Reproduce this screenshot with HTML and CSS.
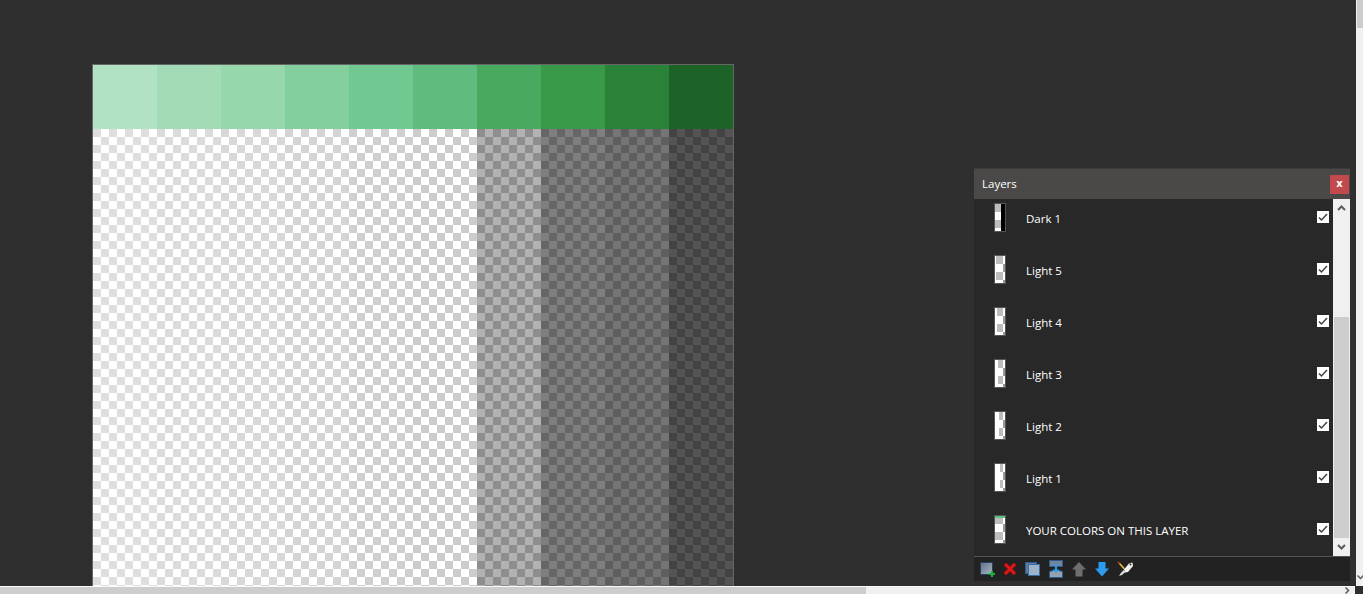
FILE: index.html
```html
<!DOCTYPE html>
<html lang="en">
<head>
    <meta charset="UTF-8">
    <meta name="viewport" content="width=device-width, initial-scale=1.0">
    <title>Layers</title>
    <link rel="stylesheet" href="styles.css">
</head>
<body>
    <div class="app">
        <main class="workspace">
            <div class="canvas">
                <div class="swatches">
                    <div class="swatch s1"></div>
                    <div class="swatch s2"></div>
                    <div class="swatch s3"></div>
                    <div class="swatch s4"></div>
                    <div class="swatch s5"></div>
                    <div class="swatch s6"></div>
                    <div class="swatch s7"></div>
                    <div class="swatch s8"></div>
                    <div class="swatch s9"></div>
                    <div class="swatch s10"></div>
                </div>
                <div class="shades">
                    <div class="shade s1"></div>
                    <div class="shade s2"></div>
                    <div class="shade s3"></div>
                    <div class="shade s4"></div>
                    <div class="shade s5"></div>
                    <div class="shade s6"></div>
                    <div class="shade s7"></div>
                    <div class="shade s8"></div>
                    <div class="shade s9"></div>
                    <div class="shade s10"></div>
                </div>
            </div>

            <!-- floating window -->
            <section class="panel">
                <header class="panel-head">
                    <span class="panel-title">Layers</span>
                    <button class="close">x</button>
                </header>
                <div class="panel-body">
                    <div class="layers">
                        <div class="layer">
                            <svg class="thumb" viewBox="0 0 10 27"><rect width="10" height="27" fill="#fff"/><path d="M0 0h6v8H0zM0 16h6v8H0z" fill="#bdbdbd"/><rect x="6" width="4" height="27" fill="#000"/></svg>
                            <span class="layer-name">Dark 1</span>
                            <svg class="check" viewBox="0 0 12 12"><rect width="12" height="12" fill="#fff"/><path d="M2 6.500l2.500 2.500L10 3" fill="none" stroke="#444" stroke-width="1.500"/></svg>
                        </div>
                        <div class="layer">
                            <svg class="thumb" viewBox="0 0 10 27"><rect width="10" height="27" fill="#fff"/><path d="M1 0h7v8H1zM1 16h7v8H1z" fill="#bdbdbd"/><path d="M8 8h2v8H8zM8 24h2v3H8z" fill="#999"/></svg>
                            <span class="layer-name">Light 5</span>
                            <svg class="check" viewBox="0 0 12 12"><rect width="12" height="12" fill="#fff"/><path d="M2 6.500l2.500 2.500L10 3" fill="none" stroke="#444" stroke-width="1.500"/></svg>
                        </div>
                        <div class="layer">
                            <svg class="thumb" viewBox="0 0 10 27"><rect width="10" height="27" fill="#fff"/><path d="M2 0h6v8H2zM2 16h6v8H2z" fill="#bdbdbd"/><path d="M8 8h2v8H8zM8 24h2v3H8z" fill="#999"/></svg>
                            <span class="layer-name">Light 4</span>
                            <svg class="check" viewBox="0 0 12 12"><rect width="12" height="12" fill="#fff"/><path d="M2 6.500l2.500 2.500L10 3" fill="none" stroke="#444" stroke-width="1.500"/></svg>
                        </div>
                        <div class="layer">
                            <svg class="thumb" viewBox="0 0 10 27"><rect width="10" height="27" fill="#fff"/><path d="M3 0h5v8H3zM3 16h5v8H3z" fill="#bdbdbd"/><path d="M8 8h2v8H8zM8 24h2v3H8z" fill="#999"/></svg>
                            <span class="layer-name">Light 3</span>
                            <svg class="check" viewBox="0 0 12 12"><rect width="12" height="12" fill="#fff"/><path d="M2 6.500l2.500 2.500L10 3" fill="none" stroke="#444" stroke-width="1.500"/></svg>
                        </div>
                        <div class="layer">
                            <svg class="thumb" viewBox="0 0 10 27"><rect width="10" height="27" fill="#fff"/><path d="M4 0h4v8H4zM4 16h4v8H4z" fill="#bdbdbd"/><path d="M8 8h2v8H8zM8 24h2v3H8z" fill="#999"/></svg>
                            <span class="layer-name">Light 2</span>
                            <svg class="check" viewBox="0 0 12 12"><rect width="12" height="12" fill="#fff"/><path d="M2 6.500l2.500 2.500L10 3" fill="none" stroke="#444" stroke-width="1.500"/></svg>
                        </div>
                        <div class="layer">
                            <svg class="thumb" viewBox="0 0 10 27"><rect width="10" height="27" fill="#fff"/><path d="M5 0h3v8H5zM5 16h3v8H5z" fill="#bdbdbd"/><path d="M8 8h2v8H8zM8 24h2v3H8z" fill="#999"/></svg>
                            <span class="layer-name">Light 1</span>
                            <svg class="check" viewBox="0 0 12 12"><rect width="12" height="12" fill="#fff"/><path d="M2 6.500l2.500 2.500L10 3" fill="none" stroke="#444" stroke-width="1.500"/></svg>
                        </div>
                        <div class="layer">
                            <svg class="thumb" viewBox="0 0 10 27"><rect width="10" height="27" fill="#fff"/><path d="M0 0h8v8H0zM0 16h8v8H0z" fill="#bdbdbd"/><path d="M8 8h2v8H8zM8 24h2v3H8z" fill="#999"/><rect width="10" height="2" fill="#5fc184"/></svg>
                            <span class="layer-name">YOUR COLORS ON THIS LAYER</span>
                            <svg class="check" viewBox="0 0 12 12"><rect width="12" height="12" fill="#fff"/><path d="M2 6.500l2.500 2.500L10 3" fill="none" stroke="#444" stroke-width="1.500"/></svg>
                        </div>
                    </div>
                    <div class="vbar">
                        <svg class="chevron" viewBox="0 0 9 6"><path d="M1 5l3.500-3.500L8 5" fill="none" stroke="#5a5a5a" stroke-width="2"/></svg>
                        <div class="vbar-thumb"></div>
                        <svg class="chevron chevron-end" viewBox="0 0 9 6"><path d="M1 1l3.500 3.500L8 1" fill="none" stroke="#5a5a5a" stroke-width="2"/></svg>
                    </div>
                </div>
                <footer class="panel-foot">
                    <!-- new layer -->
                    <span class="tool"><svg viewBox="0 0 18 18" width="18" height="18"><defs><linearGradient id="blue" x1="0" y1="0" x2="1" y2="1"><stop offset="0" stop-color="#5f7288"/><stop offset="1" stop-color="#a9b6c4"/></linearGradient></defs><rect x="2.500" y="2.500" width="12" height="12" fill="url(#blue)" stroke="#27425f"/><path d="M11 14h6M14 11v6" stroke="#18b53a" stroke-width="2"/></svg></span>
                    <!-- delete -->
                    <span class="tool"><svg viewBox="0 0 18 18" width="18" height="18"><path d="M4 4l10 10M14 4L4 14" stroke="#7a0f0f" stroke-width="4.400"/><path d="M4 4l10 10M14 4L4 14" stroke="#dc1a1a" stroke-width="2.600"/></svg></span>
                    <!-- duplicate -->
                    <span class="tool"><svg viewBox="0 0 18 18" width="18" height="18"><rect x="1.500" y="2.500" width="11" height="11" fill="#5f7a9a" stroke="#2f5c8e"/><rect x="4.500" y="4.500" width="11" height="11" fill="#9fb3c8" stroke="#3a6ea5"/></svg></span>
                    <!-- merge -->
                    <span class="tool"><svg viewBox="0 0 18 18" width="18" height="18"><path d="M2.500 .5h13v6h-13z" fill="#71869c" stroke="#2f5c8e"/><path d="M2.500 11.500l4-1h5l4 1v6h-13z" fill="#93a3b3" stroke="#2f5c8e"/><path d="M9 4v7" stroke="#2a9bf0" stroke-width="2"/><path d="M5.500 9.500h7L9 13z" fill="#2a9bf0"/></svg></span>
                    <!-- move up -->
                    <span class="tool"><svg viewBox="0 0 18 18" width="18" height="18"><path d="M9 2l7 7.500h-3.500V16.500h-7V9.500H2z" fill="#6e6e6e"/></svg></span>
                    <!-- move down -->
                    <span class="tool"><svg viewBox="0 0 18 18" width="18" height="18"><path d="M5.500 2h7v6.500H16l-7 8-7-8h3.500z" fill="#2a9bf0"/></svg></span>
                    <!-- picker -->
                    <span class="tool"><svg viewBox="0 0 18 18" width="18" height="18"><path d="M8 9.500l5-6 3.500-1 .5 3.500-5 6-3 .5z" fill="#f4f4f4"/><circle cx="14.500" cy="4.500" r="1" fill="#333"/><path d="M8.500 9L3.500 3.500" stroke="#e8c23a" stroke-width="1.600"/><path d="M3.500 3.500L2 2" stroke="#d33" stroke-width="1.600"/><path d="M7.500 10l-3 3.500L3 16l3-1 3.500-3z" fill="#d8d8d8"/></svg></span>
                </footer>
            </section>
        </main>

        <div class="scroll-y"><div class="scroll-y-thumb"></div>
            <svg class="scroll-arrow" viewBox="0 0 7 5"><path d="M.5 .5l3 3 3-3" fill="none" stroke="#5a5a5a" stroke-width="1.500"/></svg>
        </div>
        <div class="scroll-x"><div class="scroll-x-thumb"></div>
            <svg class="scroll-arrow-x" viewBox="0 0 5 7"><path d="M.5 .5l3 3-3 3" fill="none" stroke="#5a5a5a" stroke-width="1.500"/></svg>
        </div>
        <div class="scroll-corner"></div>
    </div>
</body>
</html>
```

FILE: styles.css
```css
* {
    box-sizing: border-box;
}
html, body {
    margin: 0;
    height: 100%;
    overflow: hidden;
}
body {
    font-family: "Open Sans", "Noto Sans", sans-serif;
    font-size: 11.5px;
    color: #fff;
    background-color: #2f2f2f;
}
.app {
    display: grid;
    grid-template-columns: 1fr 8px;
    grid-template-rows: 1fr 8px;
    height: 100vh;
}
.workspace {
    position: relative;
    overflow: hidden;
    padding: 64px 0 0 92px;
}

/* canvas */
.canvas {
    width: 642px;
    height: 642px;
    border: 1px solid #666;
    background-color: #fff;
    background-image: conic-gradient(#fff 25%, #ccc 0 50%, #fff 0 75%, #ccc 0);
    background-size: 16px 16px;
    display: flex;
    flex-direction: column;
}
.swatches, .shades {
    display: flex;
}
.swatches {
    height: 64px;
}
.shades {
    flex: 1;
}
.swatch, .shade {
    width: 64px;
}
.swatch.s1 { background-color: #b2e2c4; }
.swatch.s2 { background-color: #a3dbb7; }
.swatch.s3 { background-color: #96d7ac; }
.swatch.s4 { background-color: #83d09e; }
.swatch.s5 { background-color: #72c891; }
.swatch.s6 { background-color: #60bc7e; }
.swatch.s7 { background-color: #48aa5e; }
.swatch.s8 { background-color: #389a49; }
.swatch.s9 { background-color: #2a8238; }
.swatch.s10 { background-color: #1d6226; }

.shade.s1 { background-color: rgba(255, 255, 255, 0.36); }
.shade.s2 { background-color: rgba(255, 255, 255, 0.3); }
.shade.s3 { background-color: rgba(255, 255, 255, 0.24); }
.shade.s4 { background-color: rgba(255, 255, 255, 0.17); }
.shade.s5 { background-color: rgba(255, 255, 255, 0.09); }
.shade.s7 { background-color: rgba(0, 0, 0, 0.3); }
.shade.s8 { background-color: rgba(0, 0, 0, 0.5); }
.shade.s9 { background-color: rgba(0, 0, 0, 0.54); }
.shade.s10 { background-color: rgba(0, 0, 0, 0.67); }

/* layers window */
.panel {
    position: absolute;
    left: 974px;
    top: 168px;
    width: 376px;
    height: 413px;
    display: flex;
    flex-direction: column;
    background-color: #282828;
}
.panel-head {
    height: 31px;
    display: flex;
    align-items: center;
    justify-content: space-between;
    padding: 0 1px 0 8px;
    background-color: #4a4948;
    border-top: 1px solid #3c3c3c;
}
.panel-title {
    margin-bottom: 1px;
}
.close {
    width: 19px;
    height: 19px;
    padding: 0 0 2px;
    border: none;
    background-color: #c24a4c;
    color: #fff;
    font-family: "DejaVu Sans", sans-serif;
    font-size: 10px;
    font-weight: bold;
}
.panel-body {
    flex: 1;
    min-height: 0;
    display: flex;
}
.layers {
    flex: 1;
    min-width: 0;
    display: flex;
    flex-direction: column;
    justify-content: flex-end;
    overflow: hidden;
}
.layer {
    flex: none;
    height: 52px;
    display: flex;
    align-items: center;
    padding: 0 4px 0 20px;
}
.thumb {
    flex: none;
    width: 12px;
    height: 29px;
    margin-bottom: 1px;
    border: 1px solid #555;
}
.layer-name {
    flex: 1;
    margin-left: 20px;
    white-space: nowrap;
}
.check {
    flex: none;
    width: 12px;
    height: 12px;
    margin-bottom: 2px;
}
.vbar {
    flex: none;
    width: 17px;
    display: flex;
    flex-direction: column;
    align-items: center;
    background-color: #f0f0f0;
}
.chevron {
    flex: none;
    width: 9px;
    height: 6px;
    margin-top: 6px;
}
.chevron-end {
    margin: auto 0 6px;
}
.vbar-thumb {
    width: 15px;
    height: 221px;
    margin-top: 106px;
    background-color: #cdcdcd;
}
.panel-foot {
    height: 25px;
    display: flex;
    align-items: center;
    padding-left: 1px;
    background-color: #222;
    border-top: 1px solid #555;
}
.tool {
    width: 23px;
    display: flex;
    justify-content: center;
}

/* page scrollbars */
.scroll-y {
    position: relative;
    padding-left: 1px;
    background-color: #f0f0f0;
    border-left: 1px solid #2f2f2f;
}
.scroll-y-thumb {
    height: 28px;
    background-color: #cdcdcd;
}
.scroll-arrow {
    position: absolute;
    left: 1px;
    bottom: 6px;
    width: 7px;
    height: 5px;
}
.scroll-x {
    position: relative;
    background-color: #f0f0f0;
    border-top: 1px solid #fafafa;
}
.scroll-x-thumb {
    width: 866px;
    height: 100%;
    background-color: #cdcdcd;
}
.scroll-arrow-x {
    position: absolute;
    right: 5px;
    top: 0;
    width: 5px;
    height: 7px;
}
.scroll-corner {
    background-color: #2f2f2f;
}
```
